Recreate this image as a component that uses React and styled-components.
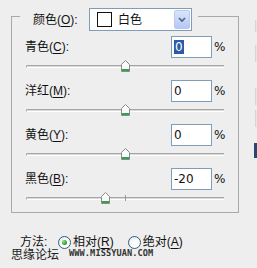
import React from 'react';
import styled, { createGlobalStyle } from 'styled-components';

const GlobalStyle = createGlobalStyle`
    html, body {
        margin: 0;
        padding: 0;
        background: #eeeeee;
    }
    body {
        font-family: "Liberation Sans", "Noto Sans CJK SC", sans-serif;
        font-size: 12px;
        color: #111;
    }
`;

const Page = styled.div`
    position: relative;
    width: 257px;
    height: 268px;
    display: flex;
    background: #eeeeee;
    overflow: hidden;
`;

const Main = styled.div`
    width: 253px;
    display: flex;
    flex-direction: column;
`;

const Frame = styled.div`
    box-sizing: border-box;
    margin: 16px 0 0 11px;
    width: 228px;
    height: 197px;
    border: 1px solid #a9a9a9;
    display: flex;
    flex-direction: column;
`;

const Legend = styled.div`
    display: flex;
    align-items: center;
    align-self: flex-start;
    margin: -9px 0 0 8px;
    padding: 0 6px 0 13px;
    height: 23px;
    background: #eeeeee;
`;

const LegendLabel = styled.span`
    width: 56px;
    line-height: 14px;
`;

const Key = styled.span`
    text-decoration: underline;
    text-underline-offset: 2px;
`;

const Dropdown = styled.div`
    box-sizing: border-box;
    width: 103px;
    height: 23px;
    border: 1px solid #7f9db9;
    background: #fff;
    display: flex;
    align-items: center;
    padding: 1px 1px 1px 7px;
`;

const Swatch = styled.span`
    box-sizing: border-box;
    width: 15px;
    height: 15px;
    border: 1px solid #111;
    background: #fff;
    margin-right: 6px;
`;

const DropText = styled.span`
    flex: 1;
    line-height: 14px;
`;

const DropButton = styled.span`
    box-sizing: border-box;
    width: 16px;
    height: 19px;
    border: 1px solid #b9c9ef;
    border-radius: 2px;
    background: linear-gradient(180deg, #dbe5fb 0%, #c3d3f8 60%, #b5c8f5 100%);
    display: flex;
    align-items: center;
    justify-content: center;
`;

const Spacer = styled.div`
    height: 6px;
`;

const Group = styled.div`
    display: flex;
    flex-direction: column;
    height: ${(p) => p.h}px;
`;

const ParamLine = styled.div`
    display: grid;
    grid-template-columns: 146px 41px 26px;
    align-items: center;
    padding-left: 13px;
    height: 22px;
`;

const ParamLabel = styled.span`
    line-height: 14px;
`;

const ValueBox = styled.div`
    box-sizing: border-box;
    height: 22px;
    border: 1px solid #7f9db9;
    background: #fff;
    display: flex;
    align-items: center;
    padding-left: 2px;
    font-family: "DejaVu Sans", "Liberation Sans", sans-serif;
    font-size: 12px;
`;

const Selected = styled.span`
    background: #2b5aa8;
    color: #fff;
    padding: 0 1px;
    line-height: 14px;
`;

const Percent = styled.span`
    padding-left: 2px;
    font-family: "DejaVu Sans", "Liberation Sans", sans-serif;
    font-size: 12px;
`;

const SliderRow = styled.div`
    position: relative;
    height: 22px;
    margin-left: 14px;
    width: 198px;
`;

const Track = styled.div`
    box-sizing: border-box;
    margin-top: 7px;
    height: 3px;
    border-top: 1px solid #a7a7a7;
    border-left: 1px solid #a7a7a7;
    border-bottom: 1px solid #ffffff;
    border-radius: 2px 0 0 2px;
    background: #d9d9d9;
`;

const Tick = styled.div`
    position: absolute;
    top: 5px;
    left: ${(p) => p.x}px;
    width: 1px;
    height: 6px;
    background: #9a9a9a;
`;

const ThumbWrap = styled.div`
    position: absolute;
    top: 2px;
    width: 9px;
    height: 12px;
`;

const MethodRow = styled.div`
    display: flex;
    align-items: center;
    margin: 22px 0 0 20px;
    height: 14px;
`;

const MethodLabel = styled.span`
    width: 38px;
    line-height: 12px;
`;

const RadioCircle = styled.span`
    box-sizing: border-box;
    width: 13px;
    height: 13px;
    border-radius: 50%;
    border: 1px solid #2c5d8f;
    background: radial-gradient(circle at 60% 65%, #ffffff 30%, #e2e0d6 100%);
    display: flex;
    align-items: center;
    justify-content: center;
    margin-right: ${(p) => p.mr}px;
`;

const RadioDot = styled.span`
    width: 5px;
    height: 5px;
    border-radius: 50%;
    background: radial-gradient(circle at 35% 35%, #8fe08f 0%, #2da12d 60%, #1f7d1f 100%);
`;

const RadioText = styled.span`
    line-height: 12px;
    margin-right: ${(p) => p.mr || 0}px;
`;

const Watermark = styled.div`
    position: absolute;
    left: 11px;
    top: 248px;
    display: flex;
    align-items: center;
`;

const WaterCn = styled.span`
    font-family: "Noto Sans CJK SC", sans-serif;
    font-size: 12px;
    line-height: 11px;
    color: #222;
    margin-right: 10px;
`;

const WaterUrl = styled.span`
    font-family: "DejaVu Sans Mono", monospace;
    font-size: 8.6px;
    line-height: 9px;
    font-weight: bold;
    color: #333;
    letter-spacing: 0.1px;
`;

const Strip = styled.div`
    width: 4px;
    display: flex;
    flex-direction: column;
`;

const StripPiece = styled.div`
    margin-top: ${(p) => p.mt}px;
    height: ${(p) => p.h}px;
    margin-left: ${(p) => (p.dark ? 1 : 2)}px;
    background: ${(p) => (p.dark ? '#2b4672' : '#e4e4e4')};
    border-left: 1px solid ${(p) => (p.dark ? '#2b4672' : '#d6d6d6')};
`;

const Thumb = ({ left }) => (
    <ThumbWrap style={{ left }}>
        <svg width="9" height="12" viewBox="0 0 9 12">
            <path d="M0.5 11.5 V4.5 L4.5 0.5 L8.5 4.5 V11.5 Z" fill="#fbfbfb" stroke="#8a8a8a" />
            <rect x="1" y="9" width="7" height="2" fill="#2fa24a" />
        </svg>
    </ThumbWrap>
);

const Chevron = () => (
    <svg width="8" height="6" viewBox="0 0 8 6">
        <path d="M1 1 L4 4 L7 1" fill="none" stroke="#4d6185" strokeWidth="1.6" />
    </svg>
);

const params = [
    { name: '青色', key: 'C', value: '0', selected: true, thumb: 95, h: 44 },
    { name: '洋红', key: 'M', value: '0', thumb: 95, h: 45 },
    { name: '黄色', key: 'Y', value: '0', thumb: 95, h: 44 },
    { name: '黑色', key: 'B', value: '-20', thumb: 75, tick: 99, h: 44 },
];

const App = () => {
    return (
        <Page>
            <GlobalStyle />
            <Main>
                <Frame>
                    <Legend>
                        <LegendLabel>颜色(<Key>O</Key>):</LegendLabel>
                        <Dropdown>
                            <Swatch />
                            <DropText>白色</DropText>
                            <DropButton><Chevron /></DropButton>
                        </Dropdown>
                    </Legend>
                    <Spacer />
                    {params.map((p) => (
                        <Group key={p.key} h={p.h}>
                            <ParamLine>
                                <ParamLabel>{p.name}(<Key>{p.key}</Key>):</ParamLabel>
                                <ValueBox>
                                    {p.selected ? <Selected>{p.value}</Selected> : p.value}
                                </ValueBox>
                                <Percent>%</Percent>
                            </ParamLine>
                            <SliderRow>
                                <Track />
                                {p.tick && <Tick x={p.tick} />}
                                <Thumb left={p.thumb} />
                            </SliderRow>
                        </Group>
                    ))}
                </Frame>
                <MethodRow>
                    <MethodLabel>方法:</MethodLabel>
                    <RadioCircle mr={2}><RadioDot /></RadioCircle>
                    <RadioText mr={14}>相对(<Key>R</Key>)</RadioText>
                    <RadioCircle mr={2} />
                    <RadioText>绝对(<Key>A</Key>)</RadioText>
                </MethodRow>
            </Main>
            <Strip>
                <StripPiece mt={20} h={12} />
                <StripPiece mt={13} h={17} />
                <StripPiece mt={26} h={17} />
                <StripPiece mt={5} h={17} />
                <StripPiece mt={16} h={15} dark />
            </Strip>
            <Watermark>
                <WaterCn>思缘论坛</WaterCn>
                <WaterUrl>WWW.MISSYUAN.COM</WaterUrl>
            </Watermark>
        </Page>
    );
};

export default App;
